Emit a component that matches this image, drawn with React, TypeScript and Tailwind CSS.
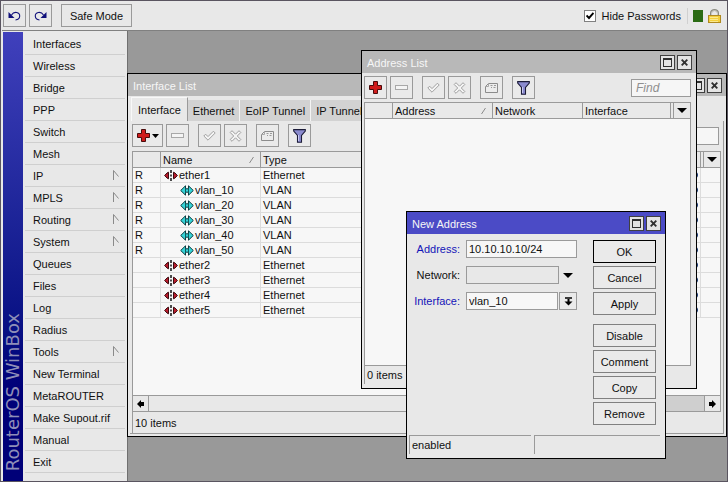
import type { ReactNode } from "react";

const MENU = [
  { label: "Interfaces" },
  { label: "Wireless" },
  { label: "Bridge" },
  { label: "PPP" },
  { label: "Switch" },
  { label: "Mesh" },
  { label: "IP", sub: true },
  { label: "MPLS", sub: true },
  { label: "Routing", sub: true },
  { label: "System", sub: true },
  { label: "Queues" },
  { label: "Files" },
  { label: "Log" },
  { label: "Radius" },
  { label: "Tools", sub: true },
  { label: "New Terminal" },
  { label: "MetaROUTER" },
  { label: "Make Supout.rif" },
  { label: "Manual" },
  { label: "Exit" },
];

const INTERFACES = [
  { flag: "R", name: "ether1", type: "Ethernet" },
  { flag: "R", name: "vlan_10", type: "VLAN" },
  { flag: "R", name: "vlan_20", type: "VLAN" },
  { flag: "R", name: "vlan_30", type: "VLAN" },
  { flag: "R", name: "vlan_40", type: "VLAN" },
  { flag: "R", name: "vlan_50", type: "VLAN" },
  { flag: "", name: "ether2", type: "Ethernet" },
  { flag: "", name: "ether3", type: "Ethernet" },
  { flag: "", name: "ether4", type: "Ethernet" },
  { flag: "", name: "ether5", type: "Ethernet" },
];

const TABS = ["Interface", "Ethernet", "EoIP Tunnel", "IP Tunnel"];

function UndoIcon({ flip }: { flip?: boolean }) {
  return (
    <svg width="13" height="12" viewBox="0 0 13 12" className={flip ? "-scale-x-100" : ""}>
      <path d="M.5 2v6h6z" fill="#10107a" />
      <path d="M3.500 5C6 .8 12 2 11.700 6.300c-.2 2.200-1.700 3.400-4.200 3.700" fill="none" stroke="#10107a" strokeWidth="1.100" />
    </svg>
  );
}

function LockIcon() {
  return (
    <svg width="13" height="14" viewBox="0 0 13 14">
      <path d="M3 7V4a3.500 3 0 0 1 7 0v3" fill="none" stroke="#8a8a80" strokeWidth="2" />
      <path d="M3.500 7V4a3 2.500 0 0 1 6 0v3" fill="none" stroke="#d8d8d0" strokeWidth=".8" />
      <rect x=".5" y="6.500" width="12" height="7" fill="#f4cf3c" stroke="#b08a20" />
      <path d="M2 8.500h8M2 10.500h8M2 12.500h8" stroke="#fbe98e" />
    </svg>
  );
}

function PlusIcon() {
  return (
    <svg width="13" height="13" viewBox="0 0 13 13">
      <path d="M4.500.5h4v4h4v4h-4v4h-4v-4h-4v-4h4z" fill="#d01c1c" stroke="#4a0c0c" />
    </svg>
  );
}

function MinusIcon() {
  return (
    <svg width="13" height="5" viewBox="0 0 13 5">
      <rect x=".5" y=".5" width="12" height="4" fill="#f4f4f4" stroke="#a8a8a8" />
    </svg>
  );
}

function CheckIcon() {
  return (
    <svg width="13" height="11" viewBox="0 0 13 11">
      <path d="M.8 6 2.600 4.200 5 6.600 10.400 1.200 12.200 3 5 10.200z" fill="#f4f4f4" stroke="#a0a0a0" />
    </svg>
  );
}

function CrossIcon() {
  return (
    <svg width="13" height="12" viewBox="0 0 13 12">
      <path
        d="M3 .7 6.500 4.200 10 .7 11.800 2.500 8.300 6 11.800 9.500 10 11.300 6.500 7.800 3 11.300 1.200 9.500 4.700 6 1.200 2.500z"
        fill="#f4f4f4"
        stroke="#a0a0a0"
      />
    </svg>
  );
}

function NoteIcon() {
  return (
    <svg width="13" height="10" viewBox="0 0 13 10">
      <path d="M3.500.5h9v9H.5v-6z" fill="#ececec" stroke="#8c8c8c" />
      <path d="M3.500.5v3h-3" fill="none" stroke="#a8a8a8" />
      <path d="M5.500 2.500h2M9 2.500h2M6 4.500h1M8.500 4.500h2" stroke="#9a9a9a" />
    </svg>
  );
}

function FunnelIcon() {
  return (
    <svg width="13" height="14" viewBox="0 0 13 14">
      <path d="M.7.6h11.600v1.400L8.500 6.500v6.800h-4V6.500L.7 2z" fill="#8b8bcf" stroke="#1c1c38" strokeWidth="1.100" />
      <path d="M5.500 6v6" stroke="#c8c8f0" />
    </svg>
  );
}

function EtherIcon() {
  return (
    <svg width="14" height="11" viewBox="0 0 14 11" className="shrink-0">
      <path d="M.6 5.500 3 3l1.500-.8v6.600L3 8zM13.400 5.500 11 3l-1.500-.8v6.600L11 8z" fill="#b81c2c" stroke="#3a0c10" />
      <path d="M7 0v3M7 4.500v2M7 8v3" stroke="#202020" strokeWidth="1.600" />
    </svg>
  );
}

function VlanIcon() {
  return (
    <svg width="14" height="11" viewBox="0 0 14 11" className="shrink-0">
      <path d="M.7 5.500 5.500.8v3h3v-3l4.800 4.700-4.800 4.700v-3h-3v3z" fill="#35d3d6" stroke="#0c3c40" />
      <path d="M5.500 4v3M8.500 4v3" stroke="#0c5a60" />
    </svg>
  );
}

function DownIcon() {
  return (
    <svg width="10" height="5" viewBox="0 0 10 5">
      <path d="M0 0h10L5 5z" fill="#000" />
    </svg>
  );
}

function ScrollArrow({ right }: { right?: boolean }) {
  return (
    <svg width="7" height="8" viewBox="0 0 7 8" className={right ? "-scale-x-100" : ""}>
      <path d="M0 4 4 0v2h3v4H4v2z" fill="#000" />
    </svg>
  );
}

function ToolButton({ label, menu, children }: { label: string; menu?: boolean; children: ReactNode }) {
  return (
    <button
      type="button"
      aria-label={label}
      className={`flex h-[23px] items-center justify-center border border-[#9a9a9a] bg-[#eaeaea] ${
        menu ? "w-[31px] gap-[2px]" : "w-[23px]"
      }`}>
      {children}
    </button>
  );
}

function Toolbar({ addMenu }: { addMenu?: boolean }) {
  return (
    <div className="flex items-center px-[2px]">
      <div className="flex gap-[3px]">
        <ToolButton label="Add" menu={addMenu}>
          <PlusIcon />
          {addMenu && (
            <svg width="7" height="4" viewBox="0 0 7 4">
              <path d="M0 0h7L3.500 4z" fill="#000" />
            </svg>
          )}
        </ToolButton>
        <ToolButton label="Remove"><MinusIcon /></ToolButton>
      </div>
      <div className="ml-[9px] flex gap-[3px]">
        <ToolButton label="Enable"><CheckIcon /></ToolButton>
        <ToolButton label="Disable"><CrossIcon /></ToolButton>
      </div>
      <div className="ml-[9px] flex gap-[9px]">
        <ToolButton label="Comment"><NoteIcon /></ToolButton>
        <ToolButton label="Filter"><FunnelIcon /></ToolButton>
      </div>
      <input
        type="search"
        aria-label="Find"
        placeholder="Find"
        className="ml-auto h-[18px] w-[60px] border border-[#9a9a9a] bg-[#f6f6f6] px-1 text-[12px] italic placeholder:text-[#8f8f8f]"
      />
    </div>
  );
}

function TitleBar({ title, active }: { title: string; active?: boolean }) {
  return (
    <header
      className={`flex h-[22px] shrink-0 items-center gap-[2px] pt-px pr-[4px] pl-[5px] text-[#f6f6f6] ${
        active ? "bg-[#4b4bc6]" : "bg-[#b8b8b8]"
      }`}>
      <h2 className="flex-1 pt-px">{title}</h2>
      <button type="button" aria-label="Maximize" className="flex size-[15px] items-center justify-center border border-[#404040] bg-[#e4e4e4]">
        <span className="size-[9px] border border-t-2 border-[#303030]" />
      </button>
      <button type="button" aria-label="Close" className="flex size-[15px] items-center justify-center border border-[#404040] bg-[#e4e4e4]">
        <svg width="7" height="7" viewBox="0 0 7 7">
          <path d="m.7.7 5.600 5.600M6.300.7.7 6.300" stroke="#303030" strokeWidth="1.900" />
        </svg>
      </button>
    </header>
  );
}

const TH = "h-4 border-r border-b border-[#9a9a9a] bg-[#e9e9e9] p-0 pl-[2px] text-left font-normal";
const TD = "h-[15px] border-b border-[#dcdcdc] p-0 pl-[2px]";

function SortMark() {
  return (
    <svg width="5" height="6" viewBox="0 0 5 6" className="mr-[6px]">
      <path d="M.5 6 4.500 0" stroke="#8a8a8a" />
    </svg>
  );
}

function InterfaceList() {
  return (
    <section className="absolute top-[42px] right-0 -left-px flex h-[364px] flex-col border border-black bg-[#e8e8e8]">
      <TitleBar title="Interface List" />
      <nav className="flex h-[25px] items-end pl-[3px]">
        {TABS.map((tab, i) => (
          <button
            key={tab}
            type="button"
            className={
              i === 0
                ? "h-[24px] border-t border-r border-l border-[#f8f8f8] border-r-[#9a9a9a] px-[6px]"
                : "h-[21px] border-r border-[#f4f4f4] bg-[#d2d2d2] px-[5px]"
            }>
            {tab}
          </button>
        ))}
      </nav>
      <div className="mr-[2px] mb-[2px] ml-[2px] flex min-h-0 flex-1 flex-col border-r border-b border-[#9a9a9a] pt-[3px] pr-[2px]">
        <Toolbar addMenu />
        <div className="mt-[4px] ml-[2px] flex min-h-0 flex-1 flex-col border border-b-0 border-[#9a9a9a]">
          <div className="flex-1 bg-[#f7f7f7]">
            <table className="w-full table-fixed border-separate border-spacing-0">
              <colgroup>
                <col className="w-[28px]" />
                <col className="w-[100px]" />
                <col />
                <col className="w-[12px]" />
                <col className="w-[3px]" />
                <col className="w-[16px]" />
              </colgroup>
              <thead>
                <tr>
                  <th className={TH} />
                  <th className={TH}>
                    <div className="flex items-center justify-between">
                      Name <SortMark />
                    </div>
                  </th>
                  <th className={TH}>Type</th>
                  <th className={TH} />
                  <th className={TH} />
                  <th className="border-b border-[#9a9a9a] bg-[#e9e9e9] p-0">
                    <div className="flex justify-center"><DownIcon /></div>
                  </th>
                </tr>
              </thead>
              <tbody>
                {INTERFACES.map((row) => {
                  const vlan = row.type === "VLAN";
                  return (
                    <tr key={row.name}>
                      <td className={`${TD} border-r`}>{row.flag}</td>
                      <td className={`${TD} border-r`}>
                        <div className={`flex items-center gap-px ${vlan ? "pl-[17px]" : "pl-px"}`}>
                          {vlan ? <VlanIcon /> : <EtherIcon />}
                          {row.name}
                        </div>
                      </td>
                      <td className={TD}>{row.type}</td>
                      <td className={`${TD} border-r`}>
                        <div className="h-[6px] w-[7px] rounded-full bg-[#1c3c78]" />
                      </td>
                      <td className={TD} />
                      <td className={TD} />
                    </tr>
                  );
                })}
              </tbody>
            </table>
          </div>
          <div className="flex h-[17px] border-t border-b border-[#9a9a9a]">
            <button type="button" aria-label="Scroll left" className="flex w-4 items-center justify-center border-r border-[#9a9a9a]">
              <ScrollArrow />
            </button>
            <div className="flex-1 bg-[#e8e8e8]" />
            <div className="w-1/6 border-l border-[#9a9a9a] bg-[#cfcfcf]" />
            <button type="button" aria-label="Scroll right" className="flex w-4 items-center justify-center border-l border-[#9a9a9a]">
              <ScrollArrow right />
            </button>
          </div>
        </div>
        <p className="ml-[2px] flex h-[21px] items-center border-l border-[#9a9a9a] pl-[2px]">10 items</p>
      </div>
    </section>
  );
}

function AddressList() {
  return (
    <section className="absolute top-[19px] left-[233px] flex h-[339px] w-[336px] flex-col border border-black bg-[#e8e8e8]">
      <TitleBar title="Address List" />
      <div className="mt-[3px] pr-[3px]">
        <Toolbar />
      </div>
      <div className="mt-[3px] mr-[5px] ml-[2px] flex-1 border border-[#9a9a9a] bg-[#f7f7f7]">
        <table className="w-full table-fixed border-separate border-spacing-0">
          <colgroup>
            <col className="w-[28px]" />
            <col className="w-[100px]" />
            <col className="w-[90px]" />
            <col />
            <col className="w-[3px]" />
            <col className="w-[16px]" />
          </colgroup>
          <thead>
            <tr>
              <th className={TH} />
              <th className={TH}>
                <div className="flex items-center justify-between">
                  Address <SortMark />
                </div>
              </th>
              <th className={TH}>Network</th>
              <th className={TH}>Interface</th>
              <th className={TH} />
              <th className="border-b border-[#9a9a9a] bg-[#e9e9e9] p-0">
                <div className="flex justify-center"><DownIcon /></div>
              </th>
            </tr>
          </thead>
        </table>
      </div>
      <p className="mb-[4px] ml-[2px] flex h-[18px] items-center border-l border-[#9a9a9a] pl-[2px]">0 items</p>
    </section>
  );
}

function ActionButton({ label, primary }: { label: string; primary?: boolean }) {
  return (
    <button
      type="button"
      className={`h-[23px] border bg-[#eaeaea] ${primary ? "border-black" : "border-[#808080]"}`}>
      {label}
    </button>
  );
}

function NewAddress() {
  const field = "h-[18px] min-w-0 flex-1 border border-[#9a9a9a] px-[2px]";
  const label = "flex-none basis-[59px] pr-[6px] text-right whitespace-nowrap";
  return (
    <section className="absolute top-[180px] left-[278px] flex h-[248px] w-[260px] flex-col border border-black bg-[#e8e8e8]">
      <TitleBar title="New Address" active />
      <form className="flex flex-1 pt-[6px] pr-[9px]">
        <div className="flex w-[170px] flex-col gap-[8px]">
          <div className="flex items-center">
            <label htmlFor="address" className={`${label} text-[#1414b8]`}>Address:</label>
            <input id="address" defaultValue="10.10.10.10/24" className={`${field} bg-[#f7f7f7]`} />
          </div>
          <div className="flex items-center">
            <label htmlFor="network" className={label}>Network:</label>
            <input id="network" className={`${field} bg-[#e8e8e8]`} />
            <button type="button" aria-label="Expand network" className="flex w-[18px] justify-center">
              <DownIcon />
            </button>
          </div>
          <div className="flex items-center">
            <label htmlFor="interface" className={`${label} text-[#1414b8]`}>Interface:</label>
            <select id="interface" className={`${field} appearance-none bg-[#f7f7f7]`}>
              <option>vlan_10</option>
            </select>
            <button
              type="button"
              aria-label="Choose interface"
              className="ml-px flex h-[18px] w-[18px] items-center justify-center border border-[#9a9a9a] bg-[#eaeaea]">
              <svg width="9" height="9" viewBox="0 0 9 9">
                <path d="M1 1h7" stroke="#000" strokeWidth="1.500" />
                <path d="M3.500 2h2v2.500h3L4.500 8.500.5 4.500h3z" fill="#000" />
              </svg>
            </button>
          </div>
        </div>
        <div className="ml-auto flex w-[63px] flex-col gap-[3px]">
          <ActionButton label="OK" primary />
          <ActionButton label="Cancel" />
          <ActionButton label="Apply" />
          <div className="mt-[6px] flex flex-col gap-[3px]">
            <ActionButton label="Disable" />
            <ActionButton label="Comment" />
            <ActionButton label="Copy" />
            <ActionButton label="Remove" />
          </div>
        </div>
      </form>
      <footer className="mb-[4px] flex h-[19px] gap-[3px] pr-[5px] pl-[2px]">
        <p className="w-[122px] border-t border-l border-[#9a9a9a] pt-[2px] pl-[2px]">enabled</p>
        <p className="flex-1 border-t border-l border-[#9a9a9a]" />
      </footer>
    </section>
  );
}

export default function App() {
  return (
    <div className="flex h-screen flex-col overflow-hidden border border-[#5a5560] bg-[#e8e8e8] pl-px font-['Liberation_Sans',Arial,sans-serif] text-[11px] leading-[14px] text-[#101010]">
      <header className="flex h-[30px] shrink-0 items-center border-b border-[#808080] pr-[6px] pl-px">
        <button type="button" aria-label="Undo" className="flex size-[23px] items-center justify-center border border-[#9a9a9a]">
          <UndoIcon />
        </button>
        <button type="button" aria-label="Redo" className="ml-[3px] flex size-[23px] items-center justify-center border border-[#9a9a9a]">
          <UndoIcon flip />
        </button>
        <button type="button" className="ml-[9px] h-[23px] w-[71px] border border-[#9a9a9a]">Safe Mode</button>
        <label className="ml-auto flex items-center gap-[6px]">
          <span className="relative flex size-[12px]">
            <input type="checkbox" defaultChecked className="size-[12px] appearance-none border border-[#808080] bg-white" />
            <svg width="8" height="8" viewBox="0 0 8 8" className="pointer-events-none absolute top-[2px] left-[2px]">
              <path d="M.5 3.500 3 6 7.500 1" fill="none" stroke="#000" strokeWidth="1.900" />
            </svg>
          </span>
          Hide Passwords
        </label>
        <span className="ml-[6px] h-4 border-l border-[#d0d0d0]" />
        <span className="ml-[5px] h-[12px] w-[10px] bg-[#2b6b14]" />
        <span className="ml-[5px]"><LockIcon /></span>
      </header>

      <div className="flex min-h-0 flex-1">
        <aside className="flex w-[126px] shrink-0 border-r border-[#707070] pt-px pl-px">
          <div className="flex w-5 flex-col justify-end bg-linear-to-b from-[#4040bc] to-[#000078] to-80% pb-[10px]">
            <span className="rotate-180 font-['DejaVu_Sans',Verdana,sans-serif] text-[18px] leading-5 whitespace-nowrap text-[#8f8fb8] [writing-mode:vertical-rl]">
              RouterOS WinBox
            </span>
          </div>
          <nav className="ml-[2px] flex-1 pt-px pr-[2px]">
            {MENU.map((item) => (
              <a
                key={item.label}
                href="#"
                className="flex h-[22px] items-center justify-between border-b border-[#cfcfcf] pr-[6px] pl-[8px]">
                {item.label}
                {item.sub && (
                  <svg width="6" height="11" viewBox="0 0 6 11">
                    <path d="M.5 10V.5l5 6" fill="none" stroke="#8a8a8a" />
                  </svg>
                )}
              </a>
            ))}
          </nav>
        </aside>

        <main className="relative flex-1 bg-[#999999]">
          <InterfaceList />
          <AddressList />
          <NewAddress />
        </main>
      </div>
    </div>
  );
}
